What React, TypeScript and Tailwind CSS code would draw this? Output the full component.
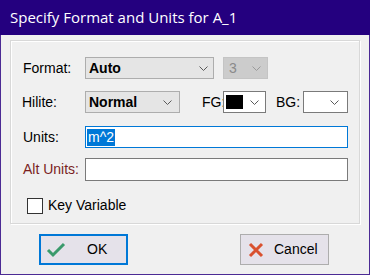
import React from "react";

const Chevron = ({ color = "#5a5a5a" }: { color?: string }) => (
  <svg width="9" height="5" viewBox="0 0 9 5" className="shrink-0">
    <polyline points="0.5,0.5 4.5,4.5 8.5,0.5" fill="none" stroke={color} strokeWidth="1" />
  </svg>
);

export default function App() {
  const font = { fontFamily: '"Liberation Sans", Arial, sans-serif' };
  return (
    <div className="w-[370px] h-[275px] flex flex-col bg-[#f0f0f0] text-[14px] text-black" style={font}>
      <div
        className="h-[35px] shrink-0 bg-[#24007f] text-white text-[15px] flex items-center pl-[10px] pb-[1px]"
        style={{ fontFamily: '"Open Sans", "Noto Sans", sans-serif' }}
      >
        Specify Format and Units for A_1
      </div>
      <div className="flex-1 border-x border-b border-[#4b2a94] flex flex-col pl-[9px] pt-[5px]">
        <div className="w-[350px] h-[184px] border border-[#d8d8d8] shadow-[1px_1px_0_#ffffff,inset_1px_1px_0_#ffffff] flex flex-col pt-[16px]">
          {/* Format row */}
          <div className="flex items-center h-[22px]">
            <div className="w-[74px] pl-[12px]">Format:</div>
            <div className="w-[129px] h-[22px] border border-[#adadad] bg-[#e5e5e5] flex items-center pl-[3px] pr-[5px] font-bold">
              <span className="flex-1">Auto</span>
              <Chevron />
            </div>
            <div className="ml-[9px] w-[45px] h-[22px] border border-[#c4c4c4] bg-[#cccccc] flex items-center pl-[5px] pr-[6px] text-[#8a8a8a]">
              <span className="flex-1">3</span>
              <Chevron color="#9a9a9a" />
            </div>
          </div>
          {/* Hilite row */}
          <div className="flex items-center h-[22px] mt-[12px]">
            <div className="w-[74px] pl-[11px]">Hilite:</div>
            <div className="w-[95px] h-[22px] border border-[#adadad] bg-[#e5e5e5] flex items-center pl-[3px] pr-[7px] font-bold">
              <span className="flex-1">Normal</span>
              <Chevron />
            </div>
            <div className="ml-[22px] w-[21px]">FG:</div>
            <div className="w-[43px] h-[22px] border border-[#7a7a7a] bg-white flex items-center pl-[2px] pr-[6px]">
              <div className="w-[17px] h-[14px] bg-black mr-[7px]" />
              <Chevron />
            </div>
            <div className="ml-[10px] w-[27px]">BG:</div>
            <div className="w-[45px] h-[22px] border border-[#7a7a7a] bg-white flex items-center justify-end pr-[8px]">
              <Chevron />
            </div>
          </div>
          {/* Units row */}
          <div className="flex items-center h-[22px] mt-[13px]">
            <div className="w-[74px] pl-[12px]">Units:</div>
            <div className="w-[263px] h-[22px] border border-[#0078d7] bg-white flex items-center pl-[1px]">
              <span className="bg-[#0078d7] text-white leading-[17px] px-[1px]">m^2</span>
            </div>
          </div>
          {/* Alt Units row */}
          <div className="flex items-center h-[23px] mt-[10px]">
            <div className="w-[74px] pl-[12px] text-[#7a1e1e]">Alt Units:</div>
            <div className="w-[263px] h-[23px] border border-[#7a7a7a] bg-white" />
          </div>
          {/* Key variable */}
          <div className="flex items-center mt-[14px] pl-[16px]">
            <div className="w-[16px] h-[16px] border border-[#333333] bg-white mr-[5px]" />
            <span>Key Variable</span>
          </div>
        </div>
        <div className="flex mt-[10px]">
          <div className="ml-[29px] w-[89px] h-[31px] border-2 border-[#0078d7] bg-[#e5e2ea] flex items-center">
            <svg width="20" height="16" viewBox="0 0 20 16" className="ml-[5px]">
              <polyline points="2,8 7,13 18,2" fill="none" stroke="#3a9a6c" strokeWidth="3" />
            </svg>
            <span className="ml-[21px]">OK</span>
          </div>
          <div className="ml-[112px] w-[89px] h-[31px] border border-[#adadad] bg-[#e5e2ea] flex items-center">
            <svg width="16" height="16" viewBox="0 0 16 16" className="ml-[7px]">
              <path d="M2,2 L14,14 M14,2 L2,14" stroke="#d9512f" strokeWidth="3" />
            </svg>
            <span className="ml-[10px]">Cancel</span>
          </div>
        </div>
      </div>
    </div>
  );
}
